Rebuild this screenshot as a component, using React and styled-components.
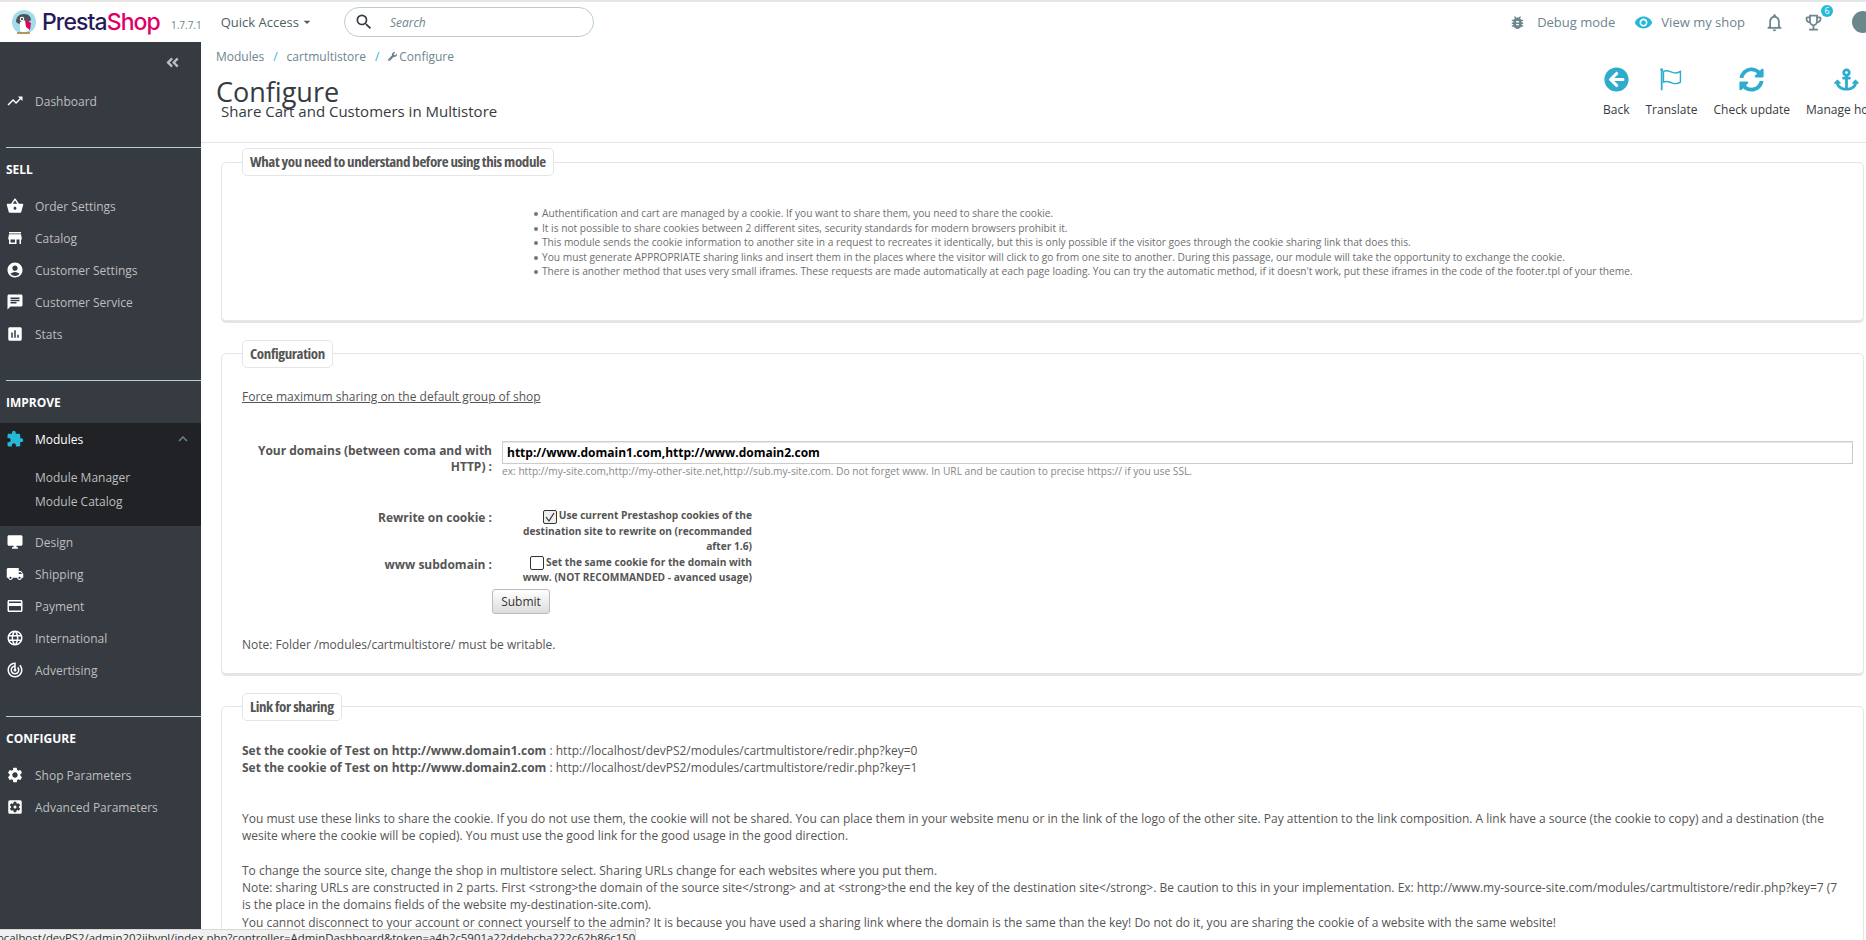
import React from 'react'
import styled, { createGlobalStyle } from 'styled-components'
import {
    MdTrendingUp,
    MdShoppingBasket,
    MdStore,
    MdAccountCircle,
    MdChat,
    MdAssessment,
    MdExtension,
    MdDesktopWindows,
    MdLocalShipping,
    MdCreditCard,
    MdLanguage,
    MdTrackChanges,
    MdSettings,
    MdSettingsApplications,
    MdBugReport,
    MdVisibility,
    MdNotificationsNone,
    MdOutlineEmojiEvents,
    MdSearch,
    MdExpandLess,
    MdArrowDropDown,
} from 'react-icons/md'
import {
    FaAngleDoubleLeft,
    FaArrowCircleLeft,
    FaSyncAlt,
    FaAnchor,
    FaWrench,
} from 'react-icons/fa'

const GlobalStyle = createGlobalStyle`
    html, body {
        margin: 0;
        height: 100%;
        overflow: hidden;
        background: #fff;
    }
    body {
        font-family: "Open Sans", "Liberation Sans", sans-serif;
        font-size: 12px;
        color: #555;
    }
`

const Page = styled.div`
    position: relative;
    width: 1866px;
    height: 940px;
    overflow: hidden;
    display: flex;
    flex-direction: column;
`

/* top bar */
const TopBar = styled.header`
    flex: none;
    height: 40px;
    border-top: 2px solid #e6e6e6;
    display: flex;
    align-items: center;
    padding-left: 12px;
    color: #6c868e;
`
const LogoText = styled.span`
    margin-left: 6px;
    font-family: Inter, "Open Sans", sans-serif;
    font-size: 23px;
    font-weight: 500;
    letter-spacing: -0.9px;
    color: #251b5b;
    b {
        font-weight: 500;
        color: #df0067;
    }
`
const Version = styled.span`
    margin: 6px 0 0 11px;
    font-size: 10px;
    color: #6c868e;
`
const QuickAccess = styled.span`
    margin-left: 19px;
    display: flex;
    align-items: center;
    font-size: 13px;
    color: #4d5f65;
`
const SearchBox = styled.div`
    margin-left: 29px;
    box-sizing: border-box;
    width: 250px;
    height: 30px;
    border: 1px solid #bbcdd2;
    border-radius: 15px;
    display: flex;
    align-items: center;
    padding-left: 9px;
    gap: 16px;
    color: #363a41;
    font-size: 20px;
    span {
        font-size: 12px;
        font-style: italic;
        color: #6c868e;
    }
`
const TopRight = styled.div`
    margin-left: auto;
    margin-right: -8px;
    display: flex;
    align-items: center;
`
const TopLink = styled.span`
    display: flex;
    align-items: center;
    gap: ${(props) => props.$gap}px;
    margin-right: ${(props) => props.$after}px;
    font-size: 13px;
    color: #6c868e;
    svg {
        font-size: ${(props) => props.$size}px;
        color: ${(props) => (props.$accent ? '#25b9d7' : '#6c868e')};
    }
`
const TopIcon = styled.span`
    position: relative;
    display: flex;
    margin-right: ${(props) => props.$after}px;
    font-size: 21px;
    color: #6c868e;
`
const Badge = styled.span`
    position: absolute;
    top: -7px;
    right: -9px;
    width: 12px;
    height: 12px;
    border-radius: 50%;
    background: #25b9d7;
    color: #fff;
    font-size: 9px;
    line-height: 12px;
    text-align: center;
`
const Avatar = styled.span`
    width: 22px;
    height: 22px;
    border-radius: 50%;
    background: #6c868e;
`

/* columns */
const Body = styled.div`
    flex: 1;
    min-height: 0;
    display: flex;
`
const Sidebar = styled.nav`
    flex: none;
    width: 201px;
    background: #363a41;
    color: #bebebe;
`
const Collapse = styled.div`
    height: 43px;
    box-sizing: border-box;
    padding: 12px 21px 0 0;
    text-align: right;
    font-size: 15px;
    color: #bebebe;
`
const NavRow = styled.div`
    height: 32px;
    display: flex;
    align-items: center;
    padding-left: 6px;
    font-size: 12px;
    color: ${(props) => (props.$active ? '#fff' : '#bebebe')};
    svg {
        flex: none;
        width: 18px;
        height: 18px;
        margin-right: 11px;
        color: ${(props) => (props.$active ? '#25b9d7' : '#fff')};
    }
`
const ExpandIcon = styled(MdExpandLess)`
    && {
        margin: 0 9px 0 auto;
        color: #6c868e;
    }
`
const Section = styled.div`
    margin: 30px 0 0 6px;
    height: 43px;
    box-sizing: border-box;
    border-top: 1px solid #bbcdd2;
    padding-top: 14px;
    font-size: 12px;
    line-height: 16px;
    font-weight: 700;
    color: #fff;
`
const ActiveGroup = styled.div`
    background: #202226;
    height: 103px;
`
const SubList = styled.div`
    padding-top: 11px;
`
const SubItem = styled.div`
    height: 24px;
    line-height: 24px;
    padding-left: 35px;
    font-size: 12px;
    color: #bebebe;
`

const Main = styled.main`
    flex: 1;
    min-width: 0;
    display: flex;
    flex-direction: column;
`
const PageHead = styled.div`
    flex: none;
    height: 100px;
    border-bottom: 1px solid #e5e5e5;
    display: flex;
    overflow: hidden;
`
const HeadLeft = styled.div`
    flex: 0 0 1402px;
    box-sizing: border-box;
    padding: 6px 0 0 15px;
`
const Crumbs = styled.div`
    display: flex;
    align-items: center;
    height: 17px;
    font-size: 12px;
    color: #6c868e;
    i {
        font-style: normal;
        margin: 0 9px;
        color: #25b9d7;
    }
    svg {
        width: 9px;
        height: 9px;
        margin-right: 2px;
    }
`
const Title = styled.h1`
    margin: 10px 0 0 0;
    font-size: 27px;
    line-height: 34px;
    font-weight: 400;
    color: #363a41;
`
const SubTitle = styled.div`
    margin: -8px 0 0 5px;
    font-size: 15px;
    line-height: 20px;
    color: #363a41;
`
const Toolbar = styled.div`
    flex: none;
    display: flex;
    gap: 16px;
    padding-top: 25px;
`
const ToolItem = styled.div`
    display: flex;
    flex-direction: column;
    align-items: center;
    font-size: 12px;
    line-height: 17px;
    color: #363a41;
    white-space: nowrap;
    svg {
        width: 25px;
        height: 25px;
        margin-bottom: 9px;
        color: #2eacce;
    }
`

const Content = styled.div`
    flex: 1;
    min-height: 0;
    padding: 5px 2px 0 20px;
`
const Panel = styled.fieldset`
    margin: 0 0 19px;
    padding: 0 20px ${(props) => props.$bottom}px;
    border: 1px solid #e5e5e5;
    border-radius: 5px;
    box-shadow: 0 2px 0 #e5e5e5;
    min-width: 0;
`
const PanelLegend = styled.legend`
    padding: 0 7px;
    height: 26px;
    border: 1px solid #e5e5e5;
    border-radius: 5px;
    background: #fff;
    font-size: 15px;
    line-height: 25px;
    font-weight: 700;
    font-stretch: 75%;
    letter-spacing: -0.4px;
    color: #555;
`
const InfoList = styled.ul`
    margin: 30px 0 0 292px;
    padding: 0;
    list-style: none;
    font-size: 10.2px;
    line-height: 14.5px;
    color: #6e6e6e;
    li::before {
        content: '';
        display: inline-block;
        width: 4px;
        height: 4px;
        margin: 0 4px 1px 0;
        border-radius: 50%;
        background: #777;
    }
`
const ForceLink = styled.a`
    display: block;
    margin-top: 20px;
    font-size: 12px;
    line-height: 17px;
    color: #555;
    text-decoration: underline;
`
const FormGrid = styled.div`
    margin: 36px -10px 0 0;
    display: grid;
    grid-template-columns: 250px 1fr;
`
const FieldLabel = styled.label`
    text-align: right;
    font-size: 12px;
    line-height: 16.5px;
    font-weight: 700;
    color: #555;
    padding-top: ${(props) => props.$top}px;
`
const FieldBody = styled.div`
    padding-left: 10px;
    margin-bottom: ${(props) => props.$after}px;
`
const DomainInput = styled.input`
    display: block;
    box-sizing: border-box;
    width: 100%;
    height: 23px;
    padding: 0 4px;
    border: 1px solid #ccc;
    box-shadow: inset 0 1px 1px #e8e8e8;
    font-family: "Open Sans", sans-serif;
    font-size: 12px;
    font-weight: 700;
    color: #000;
`
const Help = styled.p`
    margin: 0;
    font-size: 10.2px;
    line-height: 14px;
    color: #888;
`
const CheckLabel = styled.div`
    width: 232px;
    margin-left: 18px;
    text-align: right;
    font-size: 10.2px;
    line-height: 15px;
    font-weight: 700;
    color: #555;
`
const CheckBox = styled.span`
    display: inline-flex;
    align-items: center;
    justify-content: center;
    box-sizing: border-box;
    width: 14px;
    height: 14px;
    margin-right: 2px;
    vertical-align: -4px;
    border: 1px solid #333;
    border-radius: 2px;
    background: ${(props) => (props.$checked ? '#eee' : '#fff')};
    svg {
        width: 12px;
        height: 12px;
    }
`
const SubmitButton = styled.button`
    display: block;
    grid-column: 2;
    width: 58px;
    height: 25px;
    padding: 0;
    margin-left: 0;
    border: 1px solid #bbb;
    border-radius: 3px;
    background: linear-gradient(#fff, #ddd);
    font-family: "Open Sans", sans-serif;
    font-size: 12px;
    color: #333;
`
const Note = styled.p`
    margin: 22px 0 0;
    font-size: 12px;
    line-height: 17px;
    color: #555;
`
const TextBlock = styled.p`
    margin: ${(props) => props.$top}px 0 0;
    font-size: 12px;
    line-height: 17.3px;
    color: #555;
    strong {
        font-weight: 700;
    }
`

const StatusBar = styled.div`
    position: absolute;
    left: 0;
    bottom: 0;
    box-sizing: border-box;
    width: 636px;
    height: 11px;
    overflow: hidden;
    background: #f1f1f1;
    border: solid #d8d8d8;
    border-width: 1px 1px 0 0;
    font-size: 11.4px;
    line-height: 16px;
    color: #333;
    white-space: nowrap;
    text-indent: -6px;
`

const LogoMark = () => (
    <svg width="24" height="24" viewBox="0 0 24 24" style={{ flex: 'none' }}>
        <circle cx="12" cy="12" r="12" fill="#a4dbe8" />
        <path d="M4 12c0-5 3-8 8-8s7 3 7 6l-4 3-5-1-3 2z" fill="#4d5358" />
        <path d="M8 12c3-2 6-2 8 0l1 8c-3 3-7 3-9 1z" fill="#fff" />
        <path d="M13 10l6 3-1 7-4-3z" fill="#df0067" />
        <circle cx="10" cy="9" r="2.2" fill="#fff" />
        <circle cx="10" cy="9" r="1" fill="#222" />
        <path d="M5 22h13v1.5a12 12 0 0 1-13 0z" fill="#b7935f" />
    </svg>
)

const FlagIcon = () => (
    <svg viewBox="0 0 28 28" fill="none" stroke="currentColor" strokeWidth="1.6">
        <path d="M3 3v23" strokeWidth="2" />
        <circle cx="3" cy="3" r="1.6" fill="currentColor" stroke="none" />
        <path d="M5 5c4-2 7 0 10 1s6 1 9-1v12c-3 2-6 2-9 1s-6-3-10-1z" />
    </svg>
)

const Check = () => (
    <svg viewBox="0 0 12 12" fill="none" stroke="#333" strokeWidth="1.2">
        <path d="M2 6l3 4 5-8" />
    </svg>
)

const sell = [
    [MdShoppingBasket, 'Order Settings'],
    [MdStore, 'Catalog'],
    [MdAccountCircle, 'Customer Settings'],
    [MdChat, 'Customer Service'],
    [MdAssessment, 'Stats'],
]
const improve = [
    [MdDesktopWindows, 'Design'],
    [MdLocalShipping, 'Shipping'],
    [MdCreditCard, 'Payment'],
    [MdLanguage, 'International'],
    [MdTrackChanges, 'Advertising'],
]
const configure = [
    [MdSettings, 'Shop Parameters'],
    [MdSettingsApplications, 'Advanced Parameters'],
]

const navRows = (rows) =>
    rows.map(([Icon, label]) => (
        <NavRow key={label}>
            <Icon />
            {label}
        </NavRow>
    ))

const App = () => (
    <Page>
        <GlobalStyle />
        <TopBar>
            <LogoMark />
            <LogoText>
                Presta<b>Shop</b>
            </LogoText>
            <Version>1.7.7.1</Version>
            <QuickAccess>
                Quick Access
                <MdArrowDropDown size={16} />
            </QuickAccess>
            <SearchBox>
                <MdSearch />
                <span>Search</span>
            </SearchBox>
            <TopRight>
                <TopLink $gap={11} $after={19} $size={17}>
                    <MdBugReport />
                    Debug mode
                </TopLink>
                <TopLink $gap={8} $after={19} $size={19} $accent>
                    <MdVisibility />
                    View my shop
                </TopLink>
                <TopIcon $after={18}>
                    <MdNotificationsNone />
                </TopIcon>
                <TopIcon $after={28}>
                    <MdOutlineEmojiEvents />
                    <Badge>6</Badge>
                </TopIcon>
                <Avatar />
            </TopRight>
        </TopBar>
        <Body>
            <Sidebar>
                <Collapse>
                    <FaAngleDoubleLeft />
                </Collapse>
                <NavRow>
                    <MdTrendingUp />
                    Dashboard
                </NavRow>
                <Section>SELL</Section>
                {navRows(sell)}
                <Section>IMPROVE</Section>
                <ActiveGroup>
                    <NavRow $active>
                        <MdExtension />
                        Modules
                        <ExpandIcon />
                    </NavRow>
                    <SubList>
                        <SubItem>Module Manager</SubItem>
                        <SubItem>Module Catalog</SubItem>
                    </SubList>
                </ActiveGroup>
                {navRows(improve)}
                <Section>CONFIGURE</Section>
                {navRows(configure)}
            </Sidebar>
            <Main>
                <PageHead>
                    <HeadLeft>
                        <Crumbs>
                            Modules<i>/</i>cartmultistore<i>/</i>
                            <FaWrench />
                            Configure
                        </Crumbs>
                        <Title>Configure</Title>
                        <SubTitle>Share Cart and Customers in Multistore</SubTitle>
                    </HeadLeft>
                    <Toolbar>
                        <ToolItem>
                            <FaArrowCircleLeft />
                            Back
                        </ToolItem>
                        <ToolItem>
                            <FlagIcon />
                            Translate
                        </ToolItem>
                        <ToolItem>
                            <FaSyncAlt />
                            Check update
                        </ToolItem>
                        <ToolItem>
                            <FaAnchor />
                            Manage hooks
                        </ToolItem>
                    </Toolbar>
                </PageHead>
                <Content>
                    <Panel $bottom={41}>
                        <PanelLegend>What you need to understand before using this module</PanelLegend>
                        <InfoList>
                            <li>Authentification and cart are managed by a cookie. If you want to share them, you need to share the cookie.</li>
                            <li>It is not possible to share cookies between 2 different sites, security standards for modern browsers prohibit it.</li>
                            <li>This module sends the cookie information to another site in a request to recreates it identically, but this is only possible if the visitor goes through the cookie sharing link that does this.</li>
                            <li>You must generate APPROPRIATE sharing links and insert them in the places where the visitor will click to go from one site to another. During this passage, our module will take the opportunity to exchange the cookie.</li>
                            <li>There is another method that uses very small iframes. These requests are made automatically at each page loading. You can try the automatic method, if it doesn't work, put these iframes in the code of the footer.tpl of your theme.</li>
                        </InfoList>
                    </Panel>
                    <Panel $bottom={20}>
                        <PanelLegend>Configuration</PanelLegend>
                        <ForceLink>Force maximum sharing on the default group of shop</ForceLink>
                        <FormGrid>
                            <FieldLabel $top={2}>Your domains (between coma and with HTTP) :</FieldLabel>
                            <FieldBody $after={30}>
                                <DomainInput readOnly value="http://www.domain1.com,http://www.domain2.com" />
                                <Help>
                                    ex: http://my-site.com,http://my-other-site.net,http://sub.my-site.com. Do not forget www. In URL and be caution to precise https:// if you use SSL.
                                </Help>
                            </FieldBody>
                            <FieldLabel $top={2}>Rewrite on cookie :</FieldLabel>
                            <FieldBody $after={1}>
                                <CheckLabel>
                                    <CheckBox $checked>
                                        <Check />
                                    </CheckBox>
                                    Use current Prestashop cookies of the destination site to rewrite on (recommanded after 1.6)
                                </CheckLabel>
                            </FieldBody>
                            <FieldLabel $top={2}>www subdomain :</FieldLabel>
                            <FieldBody $after={4}>
                                <CheckLabel>
                                    <CheckBox />
                                    Set the same cookie for the domain with www. (NOT RECOMMANDED - avanced usage)
                                </CheckLabel>
                            </FieldBody>
                            <SubmitButton>Submit</SubmitButton>
                        </FormGrid>
                        <Note>Note: Folder /modules/cartmultistore/ must be writable.</Note>
                    </Panel>
                    <Panel $bottom={20}>
                        <PanelLegend>Link for sharing</PanelLegend>
                        <TextBlock $top={21}>
                            <strong>Set the cookie of Test on http://www.domain1.com</strong> : http://localhost/devPS2/modules/cartmultistore/redir.php?key=0
                            <br />
                            <strong>Set the cookie of Test on http://www.domain2.com</strong> : http://localhost/devPS2/modules/cartmultistore/redir.php?key=1
                        </TextBlock>
                        <TextBlock $top={34}>
                            You must use these links to share the cookie. If you do not use them, the cookie will not be shared. You can place them in your website menu or in the link of the logo of the other site. Pay attention to the link composition. A link have a source (the cookie to copy) and a destination (the wesite where the cookie will be copied). You must use the good link for the good usage in the good direction.
                        </TextBlock>
                        <TextBlock $top={17}>
                            To change the source site, change the shop in multistore select. Sharing URLs change for each websites where you put them.
                            <br />
                            Note: sharing URLs are constructed in 2 parts. First &lt;strong&gt;the domain of the source site&lt;/strong&gt; and at &lt;strong&gt;the end the key of the destination site&lt;/strong&gt;. Be caution to this in your implementation. Ex: http://www.my-source-site.com/modules/cartmultistore/redir.php?key=7 (7 is the place in the domains fields of the website my-destination-site.com).
                            <br />
                            You cannot disconnect to your account or connect yourself to the admin? It is because you have used a sharing link where the domain is the same than the key! Do not do it, you are sharing the cookie of a website with the same website!
                        </TextBlock>
                    </Panel>
                </Content>
            </Main>
        </Body>
        <StatusBar>localhost/devPS2/admin202ijbypl/index.php?controller=AdminDashboard&amp;token=a4b2c5901a22ddebcba222c62b86c150</StatusBar>
    </Page>
)

export default App
